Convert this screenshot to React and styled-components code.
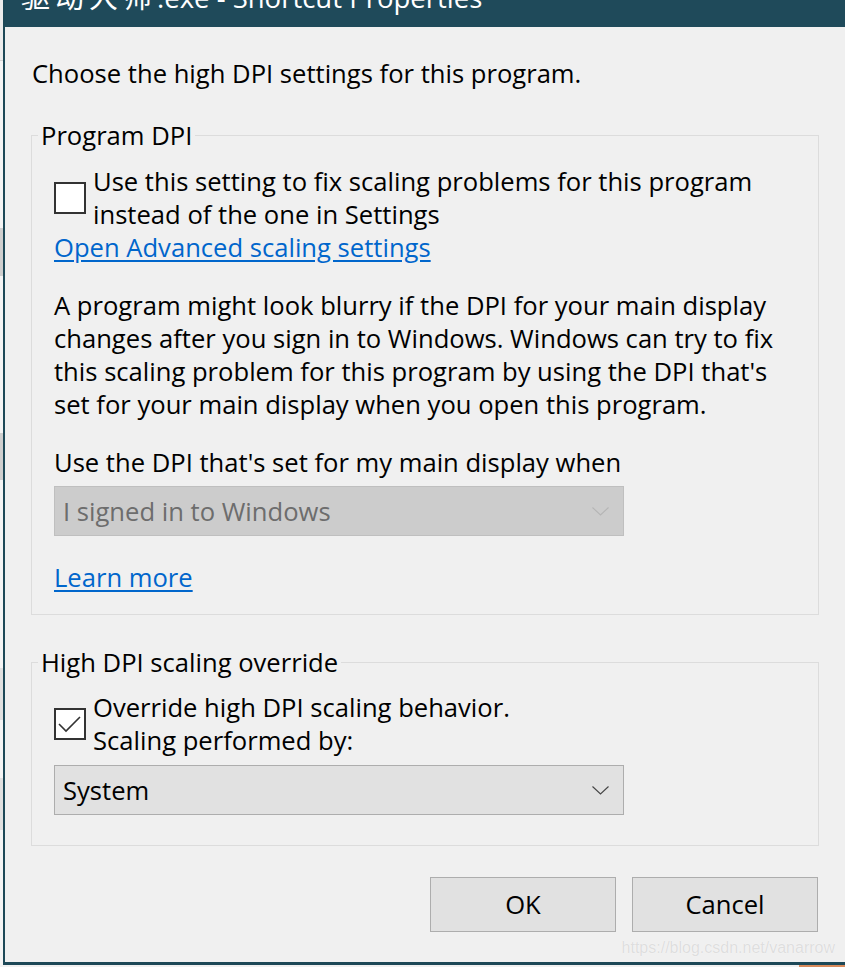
import React from "react";
import styled, { createGlobalStyle } from "styled-components";

const Global = createGlobalStyle`
  html, body { margin: 0; padding: 0; background: #f0f0f0; }
  body { font-family: "Open Sans", "Noto Sans", sans-serif; }
  * { box-sizing: border-box; }
`;

const Screen = styled.div`
  width: 845px;
  height: 967px;
  overflow: hidden;
  display: flex;
  flex-direction: column;
  background: #f0f0f0;
`;

const Main = styled.div`
  display: flex;
  height: 965px;
`;

const BackStrip = styled.div`
  width: 3px;
  flex: none;
  background: linear-gradient(
    to bottom,
    #ececec 0 60px,
    #d4d4d4 60px 61px,
    #f4f4f4 61px 228px,
    #cfcfcf 228px 276px,
    #f4f4f4 276px 433px,
    #cfcfcf 433px 480px,
    #f4f4f4 480px 668px,
    #e0e0e0 668px 720px,
    #f4f4f4 720px 778px,
    #e0e0e0 778px 830px,
    #f4f4f4 830px
  );
`;

const Window = styled.div`
  position: relative;
  flex: 1;
  display: flex;
  flex-direction: column;
  border-left: 2px solid #1d4857;
  border-bottom: 3px solid #1d4857;
  background: #f0f0f0;
`;

const TitleBar = styled.div`
  height: 27px;
  flex: none;
  background: #1f4a5a;
  overflow: hidden;
  padding-left: 16px;
`;

const TitleText = styled.div`
  margin-top: -18px;
  font-family: "Open Sans", "Noto Sans CJK SC", sans-serif;
  font-size: 27.5px;
  line-height: 27px;
  color: #ffffff;
  white-space: nowrap;
`;

const Cjk = styled.span`
  font-family: "Noto Sans CJK SC", sans-serif;
  font-size: 29px;
  letter-spacing: 5px;
`;

const Body = styled.div`
  flex: 1;
  display: flex;
  flex-direction: column;
  padding: 30px 26px 0 26px;
  font-size: 25.6px;
  line-height: 33px;
  color: #000;
`;

const Intro = styled.div`
  padding-left: 1px;
  white-space: nowrap;
`;

const Group = styled.fieldset`
  margin: ${(p) => p.$top}px 0 0 0;
  border: 1px solid #dcdcdc;
  padding: ${(p) => p.$pt}px 22px ${(p) => p.$pb}px 22px;
  display: flex;
  flex-direction: column;
  min-width: 0;
  white-space: nowrap;
`;

const Legend = styled.legend`
  margin-left: -16px;
  padding: 0 3px;
  line-height: 33px;
`;

const CheckRow = styled.div`
  display: flex;
  align-items: center;
  gap: 7px;
`;

const Box = styled.div`
  width: 32px;
  height: 32px;
  flex: none;
  border: 2px solid #333333;
  background: #ffffff;
  display: flex;
  align-items: center;
  justify-content: center;
`;

const Link = styled.a`
  color: #0066cc;
  text-decoration: underline;
  text-underline-offset: 3px;
  align-self: flex-start;
  margin-top: ${(p) => p.$top || 0}px;
`;

const Para = styled.div`
  margin-top: ${(p) => p.$top || 0}px;
`;

const Select = styled.div`
  margin-top: ${(p) => p.$top}px;
  width: 570px;
  height: 50px;
  display: flex;
  align-items: center;
  justify-content: space-between;
  padding: 0 14px 0 8px;
  background: ${(p) => (p.$disabled ? "#cccccc" : "#e1e1e1")};
  border: 1px solid ${(p) => (p.$disabled ? "#bfbfbf" : "#adadad")};
  color: ${(p) => (p.$disabled ? "#6d6d6d" : "#000000")};
`;

const Buttons = styled.div`
  margin-top: 31px;
  display: flex;
  justify-content: flex-end;
  gap: 16px;
  padding-right: 1px;
`;

const Button = styled.button`
  width: 186px;
  height: 55px;
  background: #e1e1e1;
  border: 1px solid #adadad;
  font-family: inherit;
  font-size: 25.6px;
  color: #000;
  padding: 0;
`;

const Watermark = styled.div`
  position: absolute;
  right: 10px;
  bottom: 2px;
  font-family: "Liberation Sans", Arial, sans-serif;
  font-size: 16px;
  line-height: 24px;
  color: #dedede;
  text-shadow: 0 0 1px #ffffff;
`;

const BottomStrip = styled.div`
  height: 2px;
  display: flex;
  justify-content: flex-end;
  background: #f0f0f0;
`;

const Orange = styled.div`
  width: 46px;
  background: #d98b5b;
`;

const Chevron = ({ color }) => (
  <svg width="17" height="9" viewBox="0 0 17 9">
    <polyline points="0.5,0.5 8.5,8 16.5,0.5" fill="none" stroke={color} strokeWidth="1.1" />
  </svg>
);

const Check = () => (
  <svg width="28" height="28" viewBox="0 0 28 28">
    <polyline points="3,14 10,21 24,7" fill="none" stroke="#333" strokeWidth="1.6" />
  </svg>
);

export default function App() {
  return (
    <>
      <Global />
      <Screen>
        <Main>
          <BackStrip />
          <Window>
            <TitleBar>
              <TitleText>
                <Cjk>驱动大师</Cjk>.exe - Shortcut Properties
              </TitleText>
            </TitleBar>
            <Body>
              <Intro>Choose the high DPI settings for this program.</Intro>
              <Group $top={29} $pt={13} $pb={20}>
                <Legend>Program DPI</Legend>
                <CheckRow>
                  <Box />
                  <div>
                    Use this setting to fix scaling problems for this program
                    <br />
                    instead of the one in Settings
                  </div>
                </CheckRow>
                <Link href="#">Open Advanced scaling settings</Link>
                <Para $top={25}>
                  A program might look blurry if the DPI for your main display
                  <br />
                  changes after you sign in to Windows. Windows can try to fix
                  <br />
                  this scaling problem for this program by using the DPI that's
                  <br />
                  set for your main display when you open this program.
                </Para>
                <Para $top={25}>Use the DPI that's set for my main display when</Para>
                <Select $top={7} $disabled>
                  <span>I signed in to Windows</span>
                  <Chevron color="#b5b5b5" />
                </Select>
                <Link href="#" $top={25}>Learn more</Link>
              </Group>
              <Group $top={31} $pt={12} $pb={30}>
                <Legend>High DPI scaling override</Legend>
                <CheckRow>
                  <Box>
                    <Check />
                  </Box>
                  <div>
                    Override high DPI scaling behavior.
                    <br />
                    Scaling performed by:
                  </div>
                </CheckRow>
                <Select $top={8}>
                  <span>System</span>
                  <Chevron color="#444" />
                </Select>
              </Group>
              <Buttons>
                <Button>OK</Button>
                <Button>Cancel</Button>
              </Buttons>
            </Body>
            <Watermark>https://blog.csdn.net/vanarrow</Watermark>
          </Window>
        </Main>
        <BottomStrip>
          <Orange />
        </BottomStrip>
      </Screen>
    </>
  );
}
